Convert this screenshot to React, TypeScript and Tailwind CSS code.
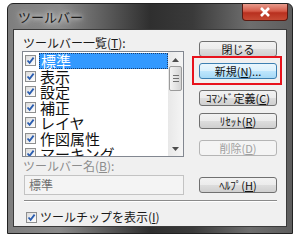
import React from "react";

const jp = "font-['Noto_Sans_CJK_JP','Noto_Sans',sans-serif]";

function Check({ on = true }: { on?: boolean }) {
  return (
    <span className="flex h-[11px] w-[11px] shrink-0 items-center justify-center border border-[#8e8f8f] bg-[linear-gradient(135deg,#dcdcdc,#ffffff)]">
      {on && (
        <svg width="9" height="9" viewBox="0 0 9 9">
          <path d="M1.5 4.5 L3.6 6.8 L7.6 1.6" fill="none" stroke="#2a5db0" strokeWidth="1.8" />
        </svg>
      )}
    </span>
  );
}

function Btn({
  children,
  className = "",
  disabled = false,
  focus = false,
}: {
  children: React.ReactNode;
  className?: string;
  disabled?: boolean;
  focus?: boolean;
}) {
  const skin = disabled
    ? "border-[#b5b5b5] bg-[#f4f4f4] text-[#a0a0a0]"
    : focus
    ? "border-[#3c7fb1] bg-[linear-gradient(#eaf6fd_0%,#d9f0fc_50%,#bee6fd_51%,#a7d9f5_100%)] text-[#111]"
    : "border-[#707070] bg-[linear-gradient(#f2f2f2_0%,#ebebeb_50%,#dddddd_51%,#cfcfcf_100%)] text-[#111]";
  return (
    <div
      className={`relative flex h-[16px] w-[78px] items-center justify-center rounded-[3px] border text-[11px] leading-none ${skin} ${className}`}
    >
      {children}
    </div>
  );
}

const items = ["標準", "表示", "設定", "補正", "レイヤ", "作図属性", "マーキング"];

export default function App() {
  return (
    <div className={`h-[241px] w-[300px] overflow-hidden bg-white pl-[7px] pt-[3px] ${jp}`}>
      <div className="relative flex h-[231px] w-[286px] flex-col rounded-t-[6px] border border-[#222] bg-[linear-gradient(90deg,#7e7e7e_0%,#8a8a8a_18%,#5a5a5a_35%,#2f2f2f_50%,#3a3a3a_65%,#6e6e6e_85%,#5e5e5e_100%)] px-[5px] pb-[5px]">
        {/* title bar */}
        <div className="flex h-[25px] items-center pl-[5px]">
          <span className="text-[13px] text-[#1c1c1c] [text-shadow:0_0_5px_#ffffff,0_0_8px_#dddddd]">
            ツールバー
          </span>
        </div>
        <div className="absolute right-[4px] top-0 flex h-[17px] w-[46px] items-center justify-center rounded-b-[4px] border border-t-0 border-[#5a1a12] bg-[linear-gradient(#e79b8c_0%,#d45a48_45%,#b8301f_55%,#c64a34_100%)]">
          <svg width="12" height="10" viewBox="0 0 12 10">
            <path d="M2 1 L10 9 M10 1 L2 9" stroke="#ffffff" strokeWidth="2.6" />
          </svg>
        </div>

        {/* client */}
        <div className="flex h-[198px] w-[274px] flex-col border border-[#3a3a3a] bg-[#f0f0f0] text-[12px] text-[#1a1a1a]">
          <div className="flex">
            {/* left column */}
            <div className="ml-[8px] flex w-[162px] flex-col">
              <div className="mt-[5px] h-[16px] pl-[1px] leading-[16px]">
                ツールバー一覧(<span className="underline">T</span>):
              </div>
              <div className="flex h-[106px] w-[162px] overflow-hidden border border-[#828790] bg-white">
                <div className="flex flex-1 flex-col pt-[1px]">
                  {items.map((t, i) => (
                    <div key={t} className="flex h-[15.5px] shrink-0 items-center pl-[2px]">
                      <Check />
                      <span
                        className={`ml-[3px] flex h-full flex-1 items-center pl-[1px] text-[15px] leading-none ${
                          i === 0
                            ? "border border-dotted border-[#1a3d6e] bg-[#3399ff] text-white"
                            : "text-[#111]"
                        }`}
                      >
                        {t}
                      </span>
                    </div>
                  ))}
                </div>
                {/* scrollbar */}
                <div className="relative flex w-[15px] shrink-0 flex-col items-center bg-[linear-gradient(90deg,#e8e8e8,#f5f5f5)]">
                  <svg className="mt-[6px]" width="7" height="4" viewBox="0 0 7 4">
                    <path d="M0 4 L3.5 0 L7 4 Z" fill="#4d4d4d" />
                  </svg>
                  <div className="mt-[4px] flex h-[25px] w-[13px] flex-col items-center justify-center gap-[2px] rounded-[2px] border border-[#9b9b9b] bg-[linear-gradient(90deg,#f3f3f3,#e4e4e4_50%,#d4d4d4)]">
                    <span className="h-px w-[6px] bg-[#707070]" />
                    <span className="h-px w-[6px] bg-[#707070]" />
                    <span className="h-px w-[6px] bg-[#707070]" />
                  </div>
                  <svg className="mt-auto mb-[5px]" width="7" height="4" viewBox="0 0 7 4">
                    <path d="M0 0 L3.5 4 L7 0 Z" fill="#4d4d4d" />
                  </svg>
                </div>
              </div>
              <div className="mt-[1px] h-[16px] pl-[1px] leading-[16px] text-[#8d8d8d]">
                ツールバー名(<span className="underline">B</span>):
              </div>
              <div className="ml-[2px] mt-[1px] flex h-[20px] w-[160px] items-center border border-[#c3c3c3] bg-[#f4f4f4] pl-[4px] text-[#707070]">
                標準
              </div>
            </div>

            {/* right column */}
            <div className="ml-[15px] flex flex-col">
              <Btn className="mt-[11px]">閉じる</Btn>
              <Btn className="mt-[6px]" focus>
                新規(<span className="underline">N</span>)...
                <span className="pointer-events-none absolute -bottom-[7px] -left-[8px] -right-[6px] -top-[8px] border-2 border-[#e8121c]" />
              </Btn>
              <Btn className="mt-[11px]">
                ｺﾏﾝﾄﾞ定義(<span className="underline">C</span>)
              </Btn>
              <Btn className="mt-[7px]">
                ﾘｾｯﾄ(<span className="underline">R</span>)
              </Btn>
              <Btn className="mt-[11px]" disabled>
                削除(<span className="underline">D</span>)
              </Btn>
              <Btn className="mt-[21px]">
                ﾍﾙﾌﾟ(<span className="underline">H</span>)
              </Btn>
            </div>
          </div>

          {/* separator */}
          <div className="ml-[10px] mt-[5px] w-[253px] border-b border-t border-b-white border-t-[#8a8a8a]" />

          {/* tooltip checkbox */}
          <div className="ml-[12px] mt-[9px] flex items-center gap-[3px]">
            <Check />
            <span className="text-[12px] leading-none">
              ツールチップを表示(<span className="underline">I</span>)
            </span>
          </div>
        </div>
      </div>
    </div>
  );
}
